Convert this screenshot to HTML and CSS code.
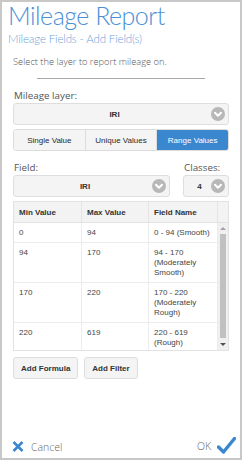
FILE: index.html
```html
<!DOCTYPE html>
<html>
<head>
<meta charset="utf-8">
<link rel="stylesheet" href="styles.css">
</head>
<body>
<div class="frame">
  <div class="head">
    <div class="title">Mileage Report</div>
    <div class="subtitle">Mileage Fields - Add Field(s)</div>
  </div>
  <div class="content">
    <div class="intro">Select the layer to report mileage on.</div>
    <div class="rule"></div>
    <div class="label">Mileage layer:</div>
    <div class="select">
      <span class="select-text">IRI</span>
      <svg class="chev" width="14" height="14" viewBox="0 0 14 14"><circle cx="7" cy="7" r="7" fill="#b8b8b8"/><path d="M4 5.7 L7 8.7 L10 5.7" fill="none" stroke="#fff" stroke-width="2" stroke-linecap="round" stroke-linejoin="round"/></svg>
    </div>
    <div class="segments">
      <div class="seg">Single Value</div>
      <div class="seg">Unique Values</div>
      <div class="seg active">Range Values</div>
    </div>
    <div class="field-row">
      <div class="field-col">
        <div class="label small-gap">Field:</div>
        <div class="select">
          <span class="select-text">IRI</span>
          <svg class="chev" width="14" height="14" viewBox="0 0 14 14"><circle cx="7" cy="7" r="7" fill="#b8b8b8"/><path d="M4 5.7 L7 8.7 L10 5.7" fill="none" stroke="#fff" stroke-width="2" stroke-linecap="round" stroke-linejoin="round"/></svg>
        </div>
      </div>
      <div class="classes-col">
        <div class="label small-gap">Classes:</div>
        <div class="select">
          <span class="select-text">4</span>
          <svg class="chev" width="14" height="14" viewBox="0 0 14 14"><circle cx="7" cy="7" r="7" fill="#b8b8b8"/><path d="M4 5.7 L7 8.7 L10 5.7" fill="none" stroke="#fff" stroke-width="2" stroke-linecap="round" stroke-linejoin="round"/></svg>
        </div>
      </div>
    </div>
    <div class="table">
      <div class="thead">
        <div class="th">Min Value</div>
        <div class="th">Max Value</div>
        <div class="th">Field Name</div>
        <div class="th sb-head"></div>
      </div>
      <div class="tbody">
        <div class="rows">
          <div class="tr r1"><div class="td">0</div><div class="td">94</div><div class="td">0 - 94 (Smooth)</div></div>
          <div class="tr r2"><div class="td">94</div><div class="td">170</div><div class="td">94 - 170<br>(Moderately<br>Smooth)</div></div>
          <div class="tr r3"><div class="td">170</div><div class="td">220</div><div class="td">170 - 220<br>(Moderately<br>Rough)</div></div>
          <div class="tr r4"><div class="td">220</div><div class="td">619</div><div class="td">220 - 619<br>(Rough)</div></div>
        </div>
        <div class="scrollbar">
          <div class="sb-btn"><span class="arr up"></span></div>
          <div class="sb-track"><div class="sb-thumb"></div></div>
          <div class="sb-btn"><span class="arr down"></span></div>
        </div>
      </div>
    </div>
    <div class="actions">
      <div class="btn">Add Formula</div>
      <div class="btn">Add Filter</div>
    </div>
  </div>
  <div class="footer">
    <div class="cancel">
      <svg width="12" height="11" viewBox="0 0 12 11"><path d="M1.5 1 L10.5 10 M10.5 1 L1.5 10" stroke="#3a87d0" stroke-width="2.6" stroke-linecap="butt"/></svg>
      <span>Cancel</span>
    </div>
    <div class="ok">
      <span>OK</span>
      <svg width="19" height="17" viewBox="0 0 19 17"><path d="M1.5 10 L6.5 15 L17.5 1.5" fill="none" stroke="#3a87d0" stroke-width="3.4" stroke-linecap="round" stroke-linejoin="round"/></svg>
    </div>
  </div>
</div>
</body>
</html>
```

FILE: styles.css
```css
html, body {
  margin: 0;
  padding: 0;
  background: #fff;
}
.frame {
  box-sizing: border-box;
  width: 242px;
  height: 460px;
  border: 2px solid #c8c8c8;
  display: flex;
  flex-direction: column;
  font-family: "Open Sans", "Liberation Sans", sans-serif;
}
.head {
  padding: 0 0 0 6px;
}
.title {
  font-family: Lato, "Open Sans", sans-serif;
  font-weight: 300;
  font-size: 25px;
  line-height: 31px;
  margin-top: -2px;
  letter-spacing: -0.5px;
  color: #4a8fd6;
}
.subtitle {
  font-family: Lato, "Open Sans", sans-serif;
  font-weight: 300;
  font-size: 11.5px;
  line-height: 15px;
  letter-spacing: -0.15px;
  color: #6a9fd8;
}
.content {
  padding: 0 11px;
  flex: 1;
  display: flex;
  flex-direction: column;
}
.intro {
  margin-top: 10px;
  font-size: 9.3px;
  line-height: 12px;
  color: #555;
  font-weight: 300;
}
.rule {
  margin: 10px 24px 0 24px;
  height: 1px;
  background: #a8a8a8;
}
.label {
  margin-top: 11px;
  font-size: 9.8px;
  line-height: 12px;
  color: #555;
  padding-left: 1px;
  margin-bottom: 1px;
}
.select {
  box-sizing: border-box;
  height: 22px;
  border: 1px solid #dedede;
  border-radius: 3px;
  background: #f4f4f4;
  display: flex;
  align-items: center;
  font-family: "Liberation Sans", Arial, sans-serif;
}
.select-text {
  flex: 1;
  text-align: center;
  font-weight: bold;
  font-size: 8px;
  color: #333;
  padding-left: 4px;
}
.chev {
  margin-right: 3px;
  flex: none;
}
.segments {
  margin-top: 4px;
  display: flex;
  height: 22px;
  border: 1px solid #dcdcdc;
  border-radius: 3px;
  overflow: hidden;
  box-sizing: border-box;
  font-family: "Liberation Sans", Arial, sans-serif;
}
.seg {
  flex: 1;
  display: flex;
  align-items: center;
  justify-content: center;
  font-size: 8px;
  color: #2a2a2a;
  background: #f4f4f4;
  border-right: 1px solid #dcdcdc;
}
.seg:last-child {
  border-right: none;
}
.seg.active {
  background: #3a87d0;
  color: #fff;
}
.field-row {
  display: flex;
  gap: 13px;
}
.field-col {
  flex: 1;
  display: flex;
  flex-direction: column;
}
.classes-col {
  width: 46px;
  display: flex;
  flex-direction: column;
}
.small-gap {
  margin-top: 11px;
}
.table {
  margin-top: 4px;
  border: 1px solid #e2e2e2;
  font-family: "Liberation Sans", Arial, sans-serif;
  font-size: 8px;
  color: #444;
}
.thead {
  display: grid;
  grid-template-columns: 68px 67px 69px 1fr;
  height: 20px;
  background: #f3f3f3;
  border-bottom: 1px solid #e2e2e2;
}
.th {
  font-weight: bold;
  color: #333;
  display: flex;
  align-items: center;
  padding-left: 5px;
  border-right: 1px solid #e4e4e4;
}
.th.sb-head {
  border-right: none;
}
.tbody {
  display: flex;
}
.rows {
  width: 204px;
}
.tr {
  display: grid;
  grid-template-columns: 68px 67px 69px;
  border-bottom: 1px solid #ececec;
  box-sizing: border-box;
}
.tr.r4 {
  border-bottom: none;
}
.td {
  padding: 5px 4px 0 5px;
  line-height: 10px;
  border-right: 1px solid #ececec;
}
.r1 { height: 20px; }
.r2, .r3 { height: 40px; }
.r4 { height: 27px; }
.scrollbar {
  flex: 1;
  display: flex;
  flex-direction: column;
  background: #f0f0f0;
}
.sb-btn {
  height: 11px;
  display: flex;
  align-items: center;
  justify-content: center;
}
.sb-track {
  flex: 1;
  padding: 0 2px;
  display: flex;
}
.sb-thumb {
  flex: 1;
  background: #c1c1c1;
  margin-bottom: 1px;
}
.arr {
  width: 0;
  height: 0;
  border-left: 3px solid transparent;
  border-right: 3px solid transparent;
}
.arr.up {
  border-bottom: 3px solid #a3a3a3;
}
.arr.down {
  border-top: 3px solid #505050;
}
.actions {
  margin-top: 6px;
  display: flex;
  gap: 6px;
}
.btn {
  box-sizing: border-box;
  height: 22px;
  padding: 0 7px;
  display: flex;
  align-items: center;
  border: 1px solid #dedede;
  border-radius: 3px;
  background: #f4f4f4;
  font-family: "Liberation Sans", Arial, sans-serif;
  font-weight: bold;
  font-size: 8px;
  color: #333;
}
.footer {
  display: flex;
  justify-content: space-between;
  align-items: flex-end;
  padding: 0 4px 4px 10px;
  height: 24px;
  box-sizing: border-box;
}
.cancel, .ok {
  display: flex;
  align-items: center;
  gap: 7px;
  font-size: 10.5px;
  color: #666;
  font-weight: 300;
}
.cancel svg {
  margin-bottom: 1px;
}
.ok {
  gap: 6px;
}
```
